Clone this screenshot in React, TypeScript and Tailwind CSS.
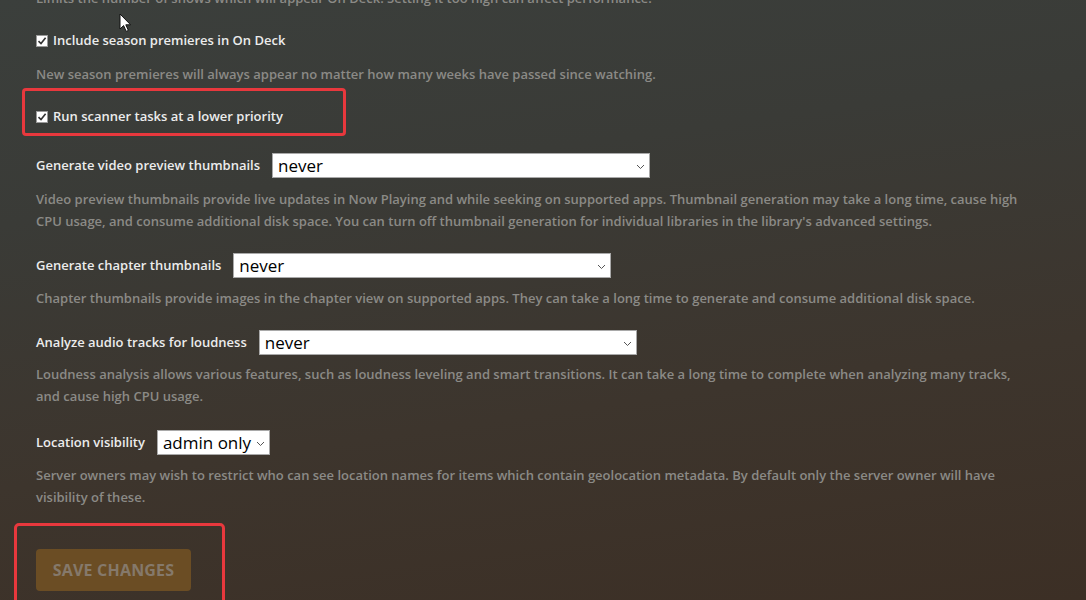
import React from "react";

const desc = "text-[13px] leading-[22px] font-semibold text-[#8b8a86]";
const label = "text-[13px] font-semibold text-[#ececec] whitespace-nowrap";

const Checkbox = ({ text }: { text: string }) => (
  <div className="flex items-center h-5">
    <span className="w-3 h-3 bg-white border border-[#9a9a9a] flex items-center justify-center">
      <svg width="10" height="10" viewBox="0 0 10 10">
        <path d="M1.5 5.2 L4 7.6 L8.6 1.8" fill="none" stroke="#333" strokeWidth="1.6" />
      </svg>
    </span>
    <span className={`${label} ml-[5px]`}>{text}</span>
  </div>
);

const Select = ({ value, width }: { value: string; width: string }) => (
  <div
    className={`relative h-[25px] ml-[12px] bg-white border border-[#a9a9a9] flex items-center pl-[5px] ${width}`}
  >
    <span className="text-[17px] leading-none text-black font-['Open_Sans',sans-serif]">
      {value}
    </span>
    <svg
      className="absolute right-[4px] top-[10px]"
      width="9"
      height="6"
      viewBox="0 0 9 6"
    >
      <path d="M1 1 L4.5 4.5 L8 1" fill="none" stroke="#555" strokeWidth="1" />
    </svg>
  </div>
);

const SelectRow = ({
  text,
  value,
  width,
  className = "",
}: {
  text: string;
  value: string;
  width: string;
  className?: string;
}) => (
  <div className={`flex items-center ${className}`}>
    <span className={label}>{text}</span>
    <Select value={value} width={width} />
  </div>
);

export default function App() {
  return (
    <div className="relative h-[600px] overflow-hidden font-['Open_Sans',sans-serif] bg-[linear-gradient(172deg,#3b3f3c_0%,#3a3b37_30%,#3d352d_65%,#3c2f25_100%)]">
      <div className="pl-9 w-[1030px] -mt-[13px]">
        <p className={desc}>
          Limits the number of shows which will appear On Deck. Setting it too high can affect
          performance.
        </p>

        <div className="mt-[22px]">
          <Checkbox text="Include season premieres in On Deck" />
        </div>
        <p className={`${desc} mt-3`}>
          New season premieres will always appear no matter how many weeks have passed since
          watching.
        </p>

        <div className="relative mt-[22px]">
          <Checkbox text="Run scanner tasks at a lower priority" />
          <div className="absolute -left-[14px] -top-[19px] w-[324px] h-[48px] border-[3px] border-[#e8383d] rounded-[4px]" />
        </div>

        <SelectRow
          className="mt-[26px]"
          text="Generate video preview thumbnails"
          value="never"
          width="w-[378px]"
        />
        <p className={`${desc} mt-[10px]`}>
          Video preview thumbnails provide live updates in Now Playing and while seeking on
          supported apps. Thumbnail generation may take a long time, cause high CPU usage, and
          consume additional disk space. You can turn off thumbnail generation for individual
          libraries in the library's advanced settings.
        </p>

        <SelectRow
          className="mt-[21px]"
          text="Generate chapter thumbnails"
          value="never"
          width="w-[378px]"
        />
        <p className={`${desc} mt-[9px]`}>
          Chapter thumbnails provide images in the chapter view on supported apps. They can take a
          long time to generate and consume additional disk space.
        </p>

        <SelectRow
          className="mt-[21px]"
          text="Analyze audio tracks for loudness"
          value="never"
          width="w-[378px]"
        />
        <p className={`${desc} mt-[8px]`}>
          Loudness analysis allows various features, such as loudness leveling and smart
          transitions. It can take a long time to complete when analyzing many tracks, and cause
          high CPU usage.
        </p>

        <SelectRow
          className="mt-[23px]"
          text="Location visibility"
          value="admin only"
          width="w-[113px]"
        />
        <p className={`${desc} mt-[9px]`}>
          Server owners may wish to restrict who can see location names for items which contain
          geolocation metadata. By default only the server owner will have visibility of these.
        </p>

        <div className="relative mt-[41px]">
          <button className="h-[42px] w-[155px] rounded-[4px] bg-[#6b4d24] text-[16px] font-bold uppercase text-[#85796b] tracking-[0.2px]">
            Save Changes
          </button>
          <div className="absolute -left-[22px] -top-[26px] w-[211px] h-[120px] border-[3px] border-[#e8383d] rounded-[5px]" />
        </div>
      </div>

      <svg
        className="absolute left-[119px] top-[13px]"
        width="13"
        height="20"
        viewBox="0 0 13 20"
      >
        <path
          d="M1 1 L1 16 L4.6 12.6 L7.2 18.4 L9.4 17.4 L6.8 11.8 L11.6 11.8 Z"
          fill="#fff"
          stroke="#111"
          strokeWidth="1"
          strokeLinejoin="round"
        />
      </svg>
    </div>
  );
}
